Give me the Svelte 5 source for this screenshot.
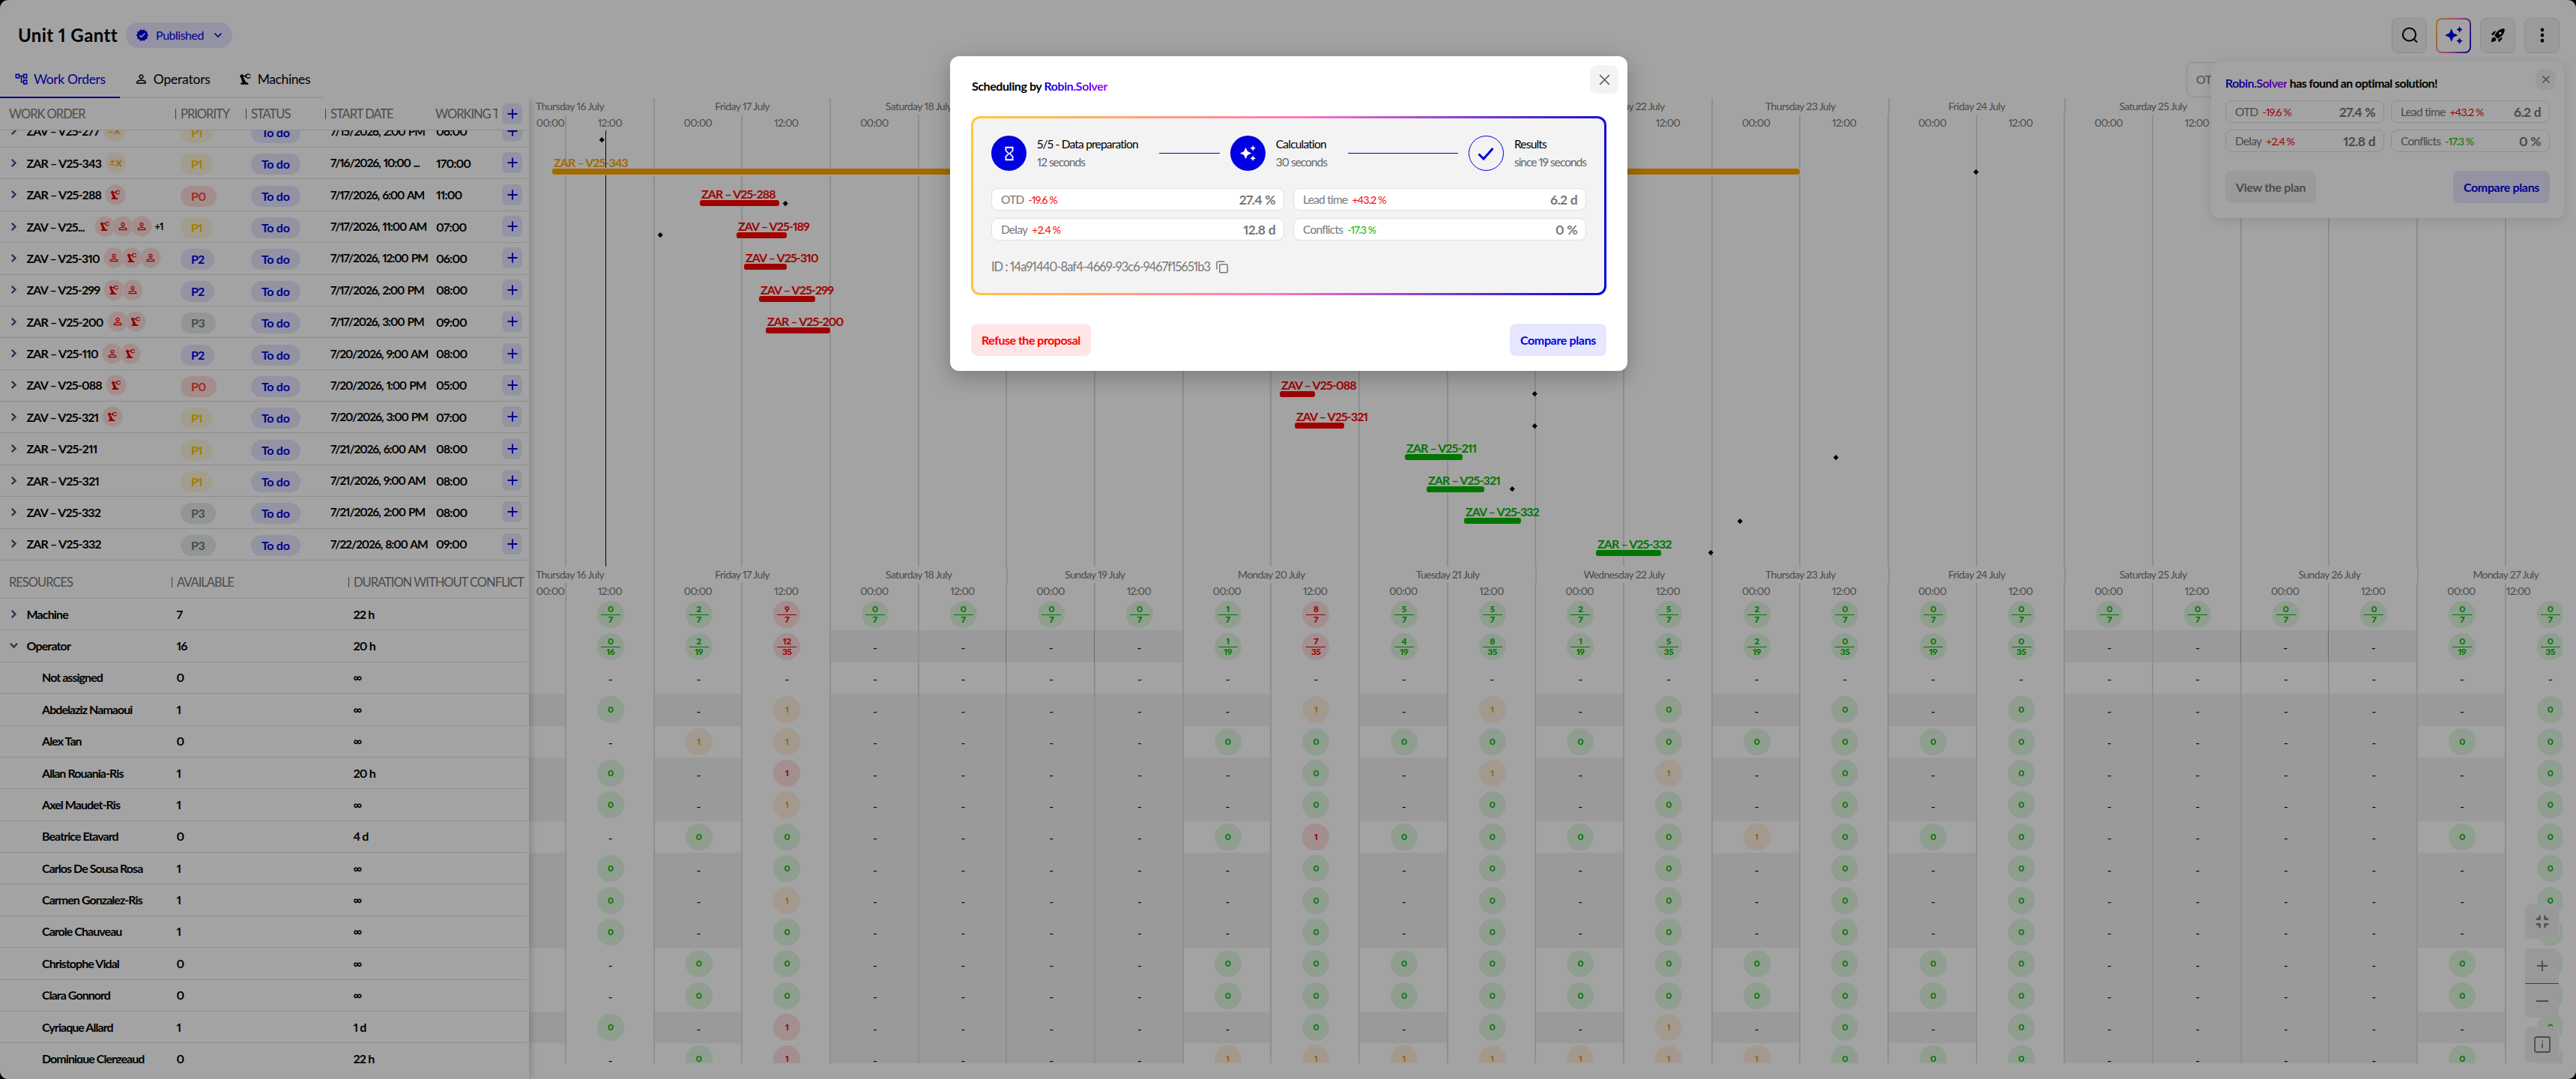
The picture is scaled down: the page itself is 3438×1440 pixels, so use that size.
<script lang="ts">
    const icons = {
        tree: 'M22 11V3h-7v3H9V3H2v8h7V8h2v10h4v3h7v-8h-7v3h-2V8h2v3h7zM7 9H4V5h3v4zm10 6h3v4h-3v-4zm0-10h3v4h-3V5z',
        person: 'M12 5.9c1.16 0 2.1.94 2.1 2.1s-.94 2.1-2.1 2.1S9.9 9.16 9.9 8s.94-2.1 2.1-2.1m0 9c2.97 0 6.1 1.46 6.1 2.1v1.1H5.9V17c0-.64 3.13-2.1 6.1-2.1M12 4C9.79 4 8 5.79 8 8s1.79 4 4 4 4-1.79 4-4-1.79-4-4-4zm0 9c-2.67 0-8 1.34-8 4v3h16v-3c0-2.66-5.33-4-8-4z',
        robot: 'M19.93 8.35l-3.6 1.68L14 7.7V6.3l2.33-2.33 3.6 1.68c.38.18.82.01 1-.36.18-.38.01-.82-.36-1l-3.92-1.83c-.38-.18-.83-.1-1.13.2L13.78 4.4c-.18-.24-.46-.4-.78-.4-.55 0-1 .45-1 1v1H8.82C8.4 4.84 7.3 4 6 4 4.34 4 3 5.34 3 7c0 1.1.6 2.05 1.48 2.58L7.08 18H6c-1.1 0-2 .9-2 2v1h13v-1c0-1.1-.9-2-2-2h-1.62L8.41 8.77c.17-.24.31-.49.41-.77H12v1c0 .55.45 1 1 1 .32 0 .6-.16.78-.4l1.74 1.74c.3.3.75.38 1.13.2l3.92-1.83c.38-.18.54-.62.36-1-.18-.37-.62-.54-1-.36z',
        verified: 'M23 12l-2.44-2.79.34-3.69-3.61-.82-1.89-3.2L12 2.96 8.6 1.5 6.71 4.69 3.1 5.5l.34 3.7L1 12l2.44 2.79-.34 3.7 3.61.82L8.6 22.5l3.4-1.47 3.4 1.46 1.89-3.19 3.61-.82-.34-3.69L23 12zm-12.91 4.72l-3.8-3.81 1.48-1.48 2.32 2.33 5.85-5.87 1.48 1.48-7.33 7.35z',
        sparkles: 'M19 9l1.25-2.75L23 5l-2.75-1.25L19 1l-1.25 2.75L15 5l2.75 1.25L19 9zm-7.5.5L9 4 6.5 9.5 1 12l5.5 2.5L9 20l2.5-5.5L17 12l-5.5-2.5zM19 15l-1.25 2.75L15 19l2.75 1.25L19 23l1.25-2.75L23 19l-2.75-1.25L19 15z',
        rocket: 'M9.19 6.35c-2.04 2.29-3.44 5.58-3.57 5.89L2 10.69l4.05-4.05c.47-.47 1.15-.68 1.81-.55l1.33.26zM11.17 17s3.74-1.55 5.89-3.7c5.4-5.4 4.5-9.62 4.21-10.57-.95-.3-5.17-1.19-10.57 4.21C8.55 9.09 7 12.83 7 12.83L11.17 17zm6.48-2.19c-2.29 2.04-5.58 3.44-5.89 3.57L13.31 22l4.05-4.05c.47-.47.68-1.15.55-1.81l-.26-1.33zM9 18c0 .83-.34 1.58-.88 2.12C6.94 21.3 2 22 2 22s.7-4.94 1.88-6.12C4.42 15.34 5.17 15 6 15c1.66 0 3 1.34 3 3zm4-9c0-1.1.9-2 2-2s2 .9 2 2-.9 2-2 2-2-.9-2-2z',
        hourglass: 'M6 2v6h.01L6 8.01 10 12l-4 4 .01.01H6V22h12v-5.99h-.01L18 16l-4-4 4-3.99-.01-.01H18V2H6zm10 14.5V20H8v-3.5l4-4 4 4zm-4-5l-4-4V4h8v3.5l-4 4z',
        shrink: 'M5 16h3v3h2v-5H5v2zm3-8H5v2h5V5H8v3zm6 11h2v-3h3v-2h-5v5zm2-11V5h-2v5h5V8h-3z',
        dots: 'M12 1.5a2.6 2.6 0 100 5.2 2.6 2.6 0 000-5.2zM12 9.4a2.6 2.6 0 100 5.2 2.6 2.6 0 000-5.2zM12 17.3a2.6 2.6 0 100 5.2 2.6 2.6 0 000-5.2z'
    };

    // left/width/milestone are in pixels from the start of the timeline
    const orders = [
        { name: 'ZAV – V25-277', badges: ['x'], prio: 'P1', date: '7/15/2026, 2:00 PM', time: '06:00', milestone: 97 },
        { name: 'ZAR – V25-343', badges: ['x'], prio: 'P1', date: '7/16/2026, 10:00 ...', time: '170:00', left: 31, width: 1665, color: 'orange', milestone: 1931 },
        { name: 'ZAR – V25-288', badges: ['robot'], prio: 'P0', date: '7/17/2026, 6:00 AM', time: '11:00', left: 228, width: 106, color: 'red', milestone: 342 },
        { name: 'ZAV – V25-189', short: 'ZAV – V25...', badges: ['robot', 'person', 'person'], more: '+1', prio: 'P1', date: '7/17/2026, 11:00 AM', time: '07:00', left: 277, width: 67, color: 'red', milestone: 175 },
        { name: 'ZAV – V25-310', badges: ['person', 'robot', 'person'], prio: 'P2', date: '7/17/2026, 12:00 PM', time: '06:00', left: 287, width: 57, color: 'red' },
        { name: 'ZAV – V25-299', badges: ['robot', 'person'], prio: 'P2', date: '7/17/2026, 2:00 PM', time: '08:00', left: 307, width: 75, color: 'red' },
        { name: 'ZAR – V25-200', badges: ['person', 'robot'], prio: 'P3', date: '7/17/2026, 3:00 PM', time: '09:00', left: 316, width: 86, color: 'red' },
        { name: 'ZAR – V25-110', badges: ['person', 'robot'], prio: 'P2', date: '7/20/2026, 9:00 AM', time: '08:00' },
        { name: 'ZAV – V25-088', badges: ['robot'], prio: 'P0', date: '7/20/2026, 1:00 PM', time: '05:00', left: 1002, width: 47, color: 'red', milestone: 1342 },
        { name: 'ZAV – V25-321', badges: ['robot'], prio: 'P1', date: '7/20/2026, 3:00 PM', time: '07:00', left: 1022, width: 66, color: 'red', milestone: 1342 },
        { name: 'ZAR – V25-211', badges: [], prio: 'P1', date: '7/21/2026, 6:00 AM', time: '08:00', left: 1169, width: 77, color: 'green', milestone: 1744 },
        { name: 'ZAR – V25-321', badges: [], prio: 'P1', date: '7/21/2026, 9:00 AM', time: '08:00', left: 1198, width: 77, color: 'green', milestone: 1312 },
        { name: 'ZAV – V25-332', badges: [], prio: 'P3', date: '7/21/2026, 2:00 PM', time: '08:00', left: 1248, width: 76, color: 'green', milestone: 1616 },
        { name: 'ZAR – V25-332', badges: [], prio: 'P3', date: '7/22/2026, 8:00 AM', time: '09:00', left: 1424, width: 87, color: 'green', milestone: 1577 }
    ];

    // one character per half day: 0 = free, o = warning, r = conflict, # = off, - = none
    const resources = [
        { name: 'Machine', available: '7', duration: '22 h', open: false, group: true, load: ['0/7', '2/7', '9/7', '0/7', '0/7', '0/7', '0/7', '1/7', '8/7', '5/7', '5/7', '2/7', '5/7', '2/7', '0/7', '0/7', '0/7', '0/7', '0/7', '0/7', '0/7', '0/7', '0/7'] },
        { name: 'Operator', available: '16', duration: '20 h', open: true, group: true, load: ['0/16', '2/19', '12/35', '#', '#', '#', '#', '1/19', '7/35', '4/19', '8/35', '1/19', '5/35', '2/19', '0/35', '0/19', '0/35', '#', '#', '#', '#', '0/19', '0/35'] },
        { name: 'Not assigned', available: '0', duration: '∞', load: [...'-----------------------'] },
        { name: 'Abdelaziz Namaoui', available: '1', duration: '∞', load: [...'0#o#####o#o#0#0#0#####0'] },
        { name: 'Alex Tan', available: '0', duration: '∞', load: [...'-oo####0000000000####00'] },
        { name: 'Allan Rouania-Ris', available: '1', duration: '20 h', load: [...'0#r#####0#o#o#0#0#####0'] },
        { name: 'Axel Maudet-Ris', available: '1', duration: '∞', load: [...'0#o#####0#0#0#0#0#####0'] },
        { name: 'Beatrice Etavard', available: '0', duration: '4 d', load: [...'-00####0r0000o000####00'] },
        { name: 'Carlos De Sousa Rosa', available: '1', duration: '∞', load: [...'0#0#####0#0#0#0#0#####0'] },
        { name: 'Carmen Gonzalez-Ris', available: '1', duration: '∞', load: [...'0#o#####0#0#0#0#0#####0'] },
        { name: 'Carole Chauveau', available: '1', duration: '∞', load: [...'0#0#####0#0#0#0#0#####0'] },
        { name: 'Christophe Vidal', available: '0', duration: '∞', load: [...'-00####0000000000####00'] },
        { name: 'Clara Gonnord', available: '0', duration: '∞', load: [...'-00####0000000000####00'] },
        { name: 'Cyriaque Allard', available: '1', duration: '1 d', load: [...'0#r#####0#0#o#0#0#####0'] },
        { name: 'Dominique Clergeaud', available: '0', duration: '22 h', load: [...'-0r####ooooooo000####00'] }
    ];

    const days = ['Thursday 16 July', 'Friday 17 July', 'Saturday 18 July', 'Sunday 19 July', 'Monday 20 July', 'Tuesday 21 July', 'Wednesday 22 July', 'Thursday 23 July', 'Friday 24 July', 'Saturday 25 July', 'Sunday 26 July', 'Monday 27 July'];
    const slots = Array.from({ length: 24 }, (_, i) => (i % 2 ? '12:00' : '00:00'));

    const stats = [
        { label: 'OTD', delta: '-19.6 %', value: '27.4 %', good: false },
        { label: 'Lead time', delta: '+43.2 %', value: '6.2 d', good: false },
        { label: 'Delay', delta: '+2.4 %', value: '12.8 d', good: false },
        { label: 'Conflicts', delta: '-17.3 %', value: '0 %', good: true }
    ];

    const tone = (v: string) => {
        if (v === 'o') return 'warn';
        if (v === 'r' || v === '9/7' || v === '12/35' || v === '8/7' || v === '7/35') return 'bad';
        return 'ok';
    };

    let modalOpen = true;
    let toastOpen = true;
</script>

{#snippet icon(path, size)}
    <svg class="icon" width={size} height={size} viewBox="0 0 24 24" fill="currentColor"><path d={path} /></svg>
{/snippet}

{#snippet chevron(size, down)}
    <svg class="icon" class:down width={size} height={size} viewBox="0 0 12 12" fill="none" stroke="currentColor" stroke-width="2.5"><path d="M3 1 8.2 6 3 11" /></svg>
{/snippet}

{#snippet cross(size)}
    <svg class="icon" width={size} height={size} viewBox="0 0 16 16" fill="none" stroke="currentColor" stroke-width="1.6"><path d="M2 2l12 12M14 2 2 14" /></svg>
{/snippet}

{#snippet plus()}
    <button class="add" aria-label="Add"><svg class="icon" width="14" height="14" viewBox="0 0 14 14" stroke="currentColor" stroke-width="2"><path d="M7 .5v13M.5 7h13" /></svg></button>
{/snippet}

{#snippet timeHeader()}
    <div class="time-header">
        <div class="day-row">
            {#each days as day}<div class="day">{day}</div>{/each}
        </div>
        <div class="hour-row">
            {#each slots as slot}<div class="hour">{slot}</div>{/each}
        </div>
    </div>
{/snippet}

{#snippet statGrid()}
    <div class="stats">
        {#each stats as s}
            <div class="stat">
                <span class="stat-label">{s.label}</span>
                <span class="delta" class:good={s.good}>{s.delta}</span>
                <span class="stat-value">{s.value}</span>
            </div>
        {/each}
    </div>
{/snippet}

<div class="app">
    <header class="topbar">
        <h1>Unit 1 Gantt</h1>
        <button class="published">
            {@render icon(icons.verified, 18)}
            <span>Published</span>
            <svg class="icon" width="12" height="12" viewBox="0 0 12 12" fill="none" stroke="currentColor" stroke-width="1.7"><path d="M1.5 3.5 6 8l4.5-4.5" /></svg>
        </button>
        <div class="tools">
            <button class="tool" aria-label="Search">
                <svg class="icon" width="24" height="24" viewBox="0 0 24 24" fill="none" stroke="currentColor" stroke-width="2"><circle cx="11.5" cy="11" r="8.6" /><path d="m17.5 17 4.5 4.5" /></svg>
            </button>
            <button class="tool solver" aria-label="Solver">{@render icon(icons.sparkles, 26)}</button>
            <button class="tool" aria-label="Launch">{@render icon(icons.rocket, 22)}</button>
            <button class="tool" aria-label="More">{@render icon(icons.dots, 22)}</button>
        </div>
    </header>

    <nav class="tabs">
        <button class="tab active">{@render icon(icons.tree, 19)}<span class="t1">Work Orders</span></button>
        <button class="tab">{@render icon(icons.person, 19)}<span class="t2">Operators</span></button>
        <button class="tab">{@render icon(icons.robot, 19)}<span class="t3">Machines</span></button>
    </nav>

    <main class="main">
        <div class="tables">
            <section class="upper">
                <div class="row head order-cols">
                    <div class="first">WORK ORDER</div>
                    <div class="sep">PRIORITY</div>
                    <div class="sep">STATUS</div>
                    <div class="sep">START DATE</div>
                    <div class="sep clip">WORKING TIME</div>
                    {@render plus()}
                </div>
                <div class="body">
                    <div class="scrolled">
                        {#each orders as o}
                            <div class="row order-cols">
                                <div class="name">
                                    <span class="toggle">{@render chevron(11, false)}</span>
                                    <span class="label" class:cut={o.short}>{o.short ?? o.name}</span>
                                    <span class="badges">
                                        {#each o.badges as b}
                                            {#if b === 'x'}
                                                <span class="badge calc"><span class="sign">±</span>X</span>
                                            {:else}
                                                <span class="badge">{@render icon(icons[b], 16)}</span>
                                            {/if}
                                        {/each}
                                    </span>
                                    {#if o.more}<span class="more">{o.more}</span>{/if}
                                </div>
                                <div class="cell"><span class="pill {o.prio}">{o.prio}</span></div>
                                <div class="cell"><span class="pill todo">To do</span></div>
                                <div class="cell date">{o.date}</div>
                                <div class="cell">{o.time}</div>
                                {@render plus()}
                            </div>
                        {/each}
                    </div>
                </div>
            </section>

            <section class="lower">
                <div class="row head resource-cols">
                    <div class="first">RESOURCES</div>
                    <div class="sep">AVAILABLE</div>
                    <div class="sep">DURATION WITHOUT CONFLICT</div>
                </div>
                <div class="body">
                    {#each resources as r}
                        <div class="row resource-cols">
                            <div class="name" class:child={!r.group}>
                                {#if r.group}<span class="toggle">{@render chevron(11, r.open)}</span>{/if}
                                <span class="label">{r.name}</span>
                            </div>
                            <div class="cell">{r.available}</div>
                            <div class="cell">{r.duration}</div>
                        </div>
                    {/each}
                </div>
            </section>
        </div>

        <div class="timelines">
            <section class="upper">
                {@render timeHeader()}
                <div class="body chart">
                    <div class="lanes">
                        {#each slots as _}<div class="lane"></div>{/each}
                    </div>
                    <div class="now"></div>
                    <div class="scrolled tracks">
                        {#each orders as o}
                            <div class="track">
                                {#if o.width}
                                    <div class="task {o.color}" style="left: {o.left}px; width: {o.width}px">
                                        <span class="task-label">{o.name}</span>
                                        <span class="bar"></span>
                                    </div>
                                {/if}
                                {#if o.milestone}<span class="milestone" style="left: {o.milestone}px"></span>{/if}
                            </div>
                        {/each}
                    </div>
                </div>
            </section>

            <section class="lower">
                {@render timeHeader()}
                <div class="body">
                    {#each resources as r}
                        <div class="load-row" class:total={r.name === 'Operator'}>
                            <div class="slot" class:off={r.load[1] === '#'}></div>
                            {#each r.load as v}
                                <div class="slot" class:off={v === '#'}>
                                    {#if v === '#' || v === '-'}
                                        <span class="dash">-</span>
                                    {:else if v.includes('/')}
                                        <span class="dot {tone(v)}">
                                            <span class="num">{v.split('/')[0]}</span>
                                            <span class="den">{v.split('/')[1]}</span>
                                        </span>
                                    {:else}
                                        <span class="dot {tone(v)}">{v === '0' ? 0 : 1}</span>
                                    {/if}
                                </div>
                            {/each}
                        </div>
                    {/each}
                </div>
            </section>
        </div>
    </main>

    <div class="kpi">OTD</div>

    {#if toastOpen}
        <aside class="toast">
            <div class="toast-title">
                <div><span class="brand">Robin.Solver</span> has found an optimal solution!</div>
                <button class="close small" aria-label="Close" onclick={() => (toastOpen = false)}>{@render cross(12)}</button>
            </div>
            {@render statGrid()}
            <div class="actions">
                <button class="btn neutral">View the plan</button>
                <button class="btn primary">Compare plans</button>
            </div>
        </aside>
    {/if}

    <div class="zoom-tools">
        <button class="float" aria-label="Fit">{@render icon(icons.shrink, 28)}</button>
        <div class="zoom">
            <button class="float" aria-label="Zoom in"><svg width="14" height="14" viewBox="0 0 14 14" stroke="currentColor" stroke-width="1.8"><path d="M7 0v14M0 7h14" /></svg></button>
            <button class="float" aria-label="Zoom out"><svg width="16" height="14" viewBox="0 0 16 14" stroke="currentColor" stroke-width="2.2"><path d="M0 7h16" /></svg></button>
        </div>
        <button class="float" aria-label="Info">
            <svg width="22" height="22" viewBox="0 0 22 22" fill="none" stroke="currentColor" stroke-width="1.8"><rect x="1" y="1" width="20" height="20" rx="2" /><path d="M11 9v7M11 5.5v2" stroke-width="1.6" /></svg>
        </button>
    </div>
</div>

{#if modalOpen}
    <div class="overlay">
        <div class="modal" role="dialog" aria-modal="true">
            <div class="modal-title">
                <div>Scheduling by <span class="brand">Robin.Solver</span></div>
                <button class="close" aria-label="Close" onclick={() => (modalOpen = false)}>{@render cross(17)}</button>
            </div>

            <div class="card">
                <div class="steps">
                    <div class="step">
                        <span class="step-icon">{@render icon(icons.hourglass, 22)}</span>
                        <div class="step-text"><div>5/5 - Data preparation</div><div class="sub">12 seconds</div></div>
                    </div>
                    <div class="line l1"></div>
                    <div class="step">
                        <span class="step-icon">{@render icon(icons.sparkles, 23)}</span>
                        <div class="step-text"><div>Calculation</div><div class="sub">30 seconds</div></div>
                    </div>
                    <div class="line l2"></div>
                    <div class="step">
                        <span class="step-icon outline">
                            <svg width="24" height="24" viewBox="0 0 24 24" fill="none" stroke="currentColor" stroke-width="3"><path d="M2.5 12.5 9 19 21.5 5" /></svg>
                        </span>
                        <div class="step-text"><div>Results</div><div class="sub">since 19 seconds</div></div>
                    </div>
                </div>
                {@render statGrid()}
                <div class="run-id">
                    <span>ID : 14a91440-8af4-4669-93c6-9467f15651b3</span>
                    <svg width="16" height="17" viewBox="0 0 16 17" fill="none" stroke="currentColor" stroke-width="1.5"><rect x="4.75" y="4.75" width="10.5" height="11" rx="1.8" /><path d="M1 11.5V3a2 2 0 0 1 2-2h8.5" /></svg>
                </div>
            </div>

            <div class="actions">
                <button class="btn danger">Refuse the proposal</button>
                <button class="btn primary">Compare plans</button>
            </div>
        </div>
    </div>
{/if}

<style>
    :global(body) {
        background: #000;
        overflow: hidden;
    }

    .app, .overlay {
        font-family: Lato, 'Open Sans', sans-serif;
        font-variant-numeric: proportional-nums;
        width: 3438px;
        height: 1440px;
        box-sizing: border-box;
    }

    .app {
        position: relative;
        display: flex;
        flex-direction: column;
        background: #fff;
        border-radius: 11px;
        overflow: hidden;
        color: #000;
    }

    button {
        font: inherit;
        font-variant-numeric: inherit;
        color: inherit;
        border: none;
        background: none;
        padding: 0;
        display: flex;
        align-items: center;
        justify-content: center;
        letter-spacing: inherit;
        box-sizing: border-box;
    }

    .icon {
        display: block;
        flex: none;
    }

    .down {
        transform: rotate(90deg);
    }

    /* Top bar */
    .topbar {
        display: flex;
        align-items: center;
        height: 94px;
        padding: 0 22px 0 24px;
    }

    h1 {
        margin: -2px 0 0;
        width: 144px;
        font-size: 24px;
        font-weight: 700;
        letter-spacing: 0.4px;
        white-space: nowrap;
    }

    .published {
        width: 142px;
        height: 34px;
        border-radius: 17px;
        background: #e6e6ff;
        color: #0000e0;
        font-size: 16px;
        letter-spacing: -0.5px;
    }

    .published span {
        margin: -2px 13px 0 9px;
    }

    .tools {
        display: flex;
        gap: 12px;
        margin-left: auto;
    }

    .tool {
        width: 47px;
        height: 47px;
        border-radius: 8px;
        border: 1px solid #dfdfdf;
        background: #f2f2f2;
    }

    .solver {
        color: #0000e0;
        border: 2px solid transparent;
        background: linear-gradient(#fff, #fff) padding-box, linear-gradient(110deg, #ffc62e, #f26fb5 50%, #0000e0) border-box;
    }

    .tabs {
        display: flex;
        height: 37px;
        width: 433px;
    }

    .tab {
        justify-content: flex-start;
        gap: 7px;
        font-size: 17.5px;
        letter-spacing: -0.2px;
        padding: 0 19px 12px;
        border-bottom: 2px solid #f0f0f0;
        white-space: nowrap;
    }

    .tab:last-child {
        flex: 1;
        padding-left: 18px;
    }

    .tab.active {
        width: 160px;
        color: #0000e0;
        border-color: #0000e0;
    }

    .t1 {
        letter-spacing: -0.35px;
    }

    .t3 {
        letter-spacing: -0.4px;
    }

    /* Tables */
    .main {
        flex: 1;
        display: flex;
        min-height: 0;
    }

    .tables {
        width: 706px;
        flex: none;
        background: #fff;
        box-shadow: 3px 0 9px rgba(0, 0, 0, 0.18);
        z-index: 1;
        clip-path: inset(0 -20px 0 0);
    }

    .upper {
        height: 625px;
        display: flex;
        flex-direction: column;
    }

    .lower {
        height: 663px;
        display: flex;
        flex-direction: column;
    }

    .body {
        flex: 1;
        min-height: 0;
        overflow: hidden;
    }

    .scrolled {
        margin-top: -19.3px;
    }

    .row {
        display: grid;
        align-items: center;
        height: 42.38px;
        width: 704px;
        box-sizing: border-box;
        padding-bottom: 1px;
        border-bottom: 1px solid #dedede;
        font-size: 16px;
        font-weight: 700;
        letter-spacing: -0.85px;
        white-space: nowrap;
    }

    .order-cols {
        grid-template-columns: 234px 94px 106px 141px 95px 34px;
    }

    .resource-cols {
        grid-template-columns: 229px 236px 1fr;
    }

    .row.head {
        height: 43px;
        padding-bottom: 0;
        flex: none;
        color: #777;
        font-size: 16.5px;
        font-weight: 400;
        letter-spacing: -1px;
    }

    .first {
        padding-left: 12px;
    }

    .sep {
        display: flex;
        align-items: center;
        gap: 6px;
    }

    .sep::before {
        content: '';
        width: 1px;
        height: 14px;
        background: #666;
    }

    .clip {
        width: 89px;
        overflow: hidden;
    }

    .name {
        display: flex;
        align-items: center;
        padding-left: 13px;
    }

    .toggle {
        width: 22.5px;
        color: #4a4a82;
    }

    .child {
        padding-left: 56px;
    }

    .child .label {
        letter-spacing: -0.95px;
    }

    .label.cut {
        margin-right: 8px;
    }

    .badges {
        display: flex;
        margin-left: 5px;
    }

    .badge {
        display: flex;
        align-items: center;
        justify-content: center;
        width: 28px;
        height: 28px;
        margin-right: -3.5px;
        border-radius: 50%;
        box-sizing: border-box;
        border: 1px solid #ffecec;
        background: #ffdede;
        color: #e80000;
    }

    .badge.calc {
        background: #ffefdf;
        border-color: #fff3e8;
        color: #f5a400;
        font-size: 12px;
        font-weight: 900;
    }

    .sign {
        font-size: 12px;
        margin: -2px 2px 0 0;
    }

    .more {
        font-size: 13.5px;
        margin-left: 7px;
    }

    .cell {
        padding-left: 7px;
    }

    .date {
        letter-spacing: -1.1px;
        word-spacing: 1.5px;
        font-size: 15.5px;
    }

    .resource-cols .cell {
        padding-left: 6.5px;
    }

    .pill {
        display: inline-block;
        height: 28px;
        line-height: 27px;
        border-radius: 14px;
        padding: 0 14px;
        margin-top: 4px;
        letter-spacing: -0.3px;
        vertical-align: middle;
    }

    .P0 {
        background: #ffdedc;
        color: #ff4034;
    }

    .P1 {
        background: #fff6de;
        color: #ffc400;
        letter-spacing: -1px;
    }

    .P2, .todo {
        background: #e6e6ff;
        color: #0000e0;
    }

    .P2 {
        letter-spacing: -0.9px;
    }

    .P3 {
        background: #e6ebed;
        color: #70777a;
    }

    .add {
        width: 27px;
        height: 28px;
        border-radius: 8px;
        background: #e6e6ff;
        color: #0000e0;
    }

    /* Timelines */
    .timelines {
        width: 2714px;
        overflow: hidden;
    }

    .time-header {
        flex: none;
        height: 43px;
        color: #777;
        font-size: 14px;
        letter-spacing: -0.6px;
        white-space: nowrap;
    }

    .day-row {
        display: grid;
        grid-template-columns: 166px repeat(11, 235.36px);
        height: 22px;
    }

    .day {
        display: flex;
        align-items: center;
        justify-content: center;
        padding-bottom: 2px;
        border-left: 2px solid #dedede;
    }

    .day:first-child {
        justify-content: flex-start;
        padding-left: 9px;
        border: none;
    }

    .hour-row, .load-row, .lanes {
        display: grid;
        grid-template-columns: 48px repeat(23, 117.68px);
    }

    .hour-row {
        height: 21px;
    }

    .hour {
        display: flex;
        align-items: center;
        justify-content: center;
        border-left: 2px solid #dedede;
        padding-bottom: 1px;
    }

    .hour:first-child {
        border: none;
        padding: 0 0 1px 9px;
    }

    .hour:last-child {
        justify-content: flex-start;
    }

    .chart {
        display: grid;
        grid-template-rows: 100%;
        grid-template-columns: 100%;
    }

    .lanes, .tracks, .now {
        grid-area: 1 / 1;
    }

    .lane {
        border-left: 2px solid #dedede;
    }

    .lane:first-child {
        border: none;
    }

    .now {
        width: 1px;
        margin-left: 102px;
        background: #000;
    }

    .track {
        position: relative;
        height: 42.38px;
    }

    .task {
        position: absolute;
        top: 11px;
        height: 25px;
        color: currentColor;
    }

    .task-label {
        display: block;
        height: 17px;
        line-height: 18px;
        padding-left: 2px;
        font-size: 16px;
        font-weight: 700;
        letter-spacing: -0.9px;
        white-space: nowrap;
    }

    .bar {
        display: block;
        height: 8px;
        border-radius: 3px;
        background: currentColor;
        box-shadow: 0 0 0 1px #fff;
    }

    .orange {
        color: #ffa600;
    }

    .red {
        color: #fa0000;
    }

    .green {
        color: #00b900;
    }

    .milestone {
        position: absolute;
        top: 29.5px;
        width: 4.5px;
        height: 4.5px;
        margin-left: -2px;
        background: #000;
        transform: rotate(45deg);
    }

    .load-row {
        height: 42.38px;
    }

    .slot {
        display: flex;
        align-items: center;
        justify-content: center;
        border-left: 2px solid #dedede;
        padding-left: 2px;
    }

    .slot:first-child {
        border: none;
    }

    .off {
        background: #f1f1f1;
    }

    .total .slot:nth-child(7), .total .slot:nth-child(8), .total .slot:nth-child(21), .total .slot:nth-child(22) {
        border-left: 1px solid #a5a5a5;
    }

    .dash {
        font-size: 16px;
        margin-top: 2px;
    }

    .dot {
        display: flex;
        flex-direction: column;
        align-items: center;
        justify-content: center;
        width: 36px;
        height: 36px;
        border-radius: 50%;
        font-size: 12px;
        line-height: 12px;
        font-weight: 900;
        letter-spacing: -0.5px;
    }

    .num {
        padding-bottom: 1px;
        width: 26px;
        text-align: center;
        border-bottom: 1px solid currentColor;
    }

    .ok {
        background: #e2f7e2;
        color: #00b900;
    }

    .warn {
        background: #fff0e0;
        color: #ee9d0a;
    }

    .bad {
        background: #ffe0e0;
        color: #f40000;
    }

    /* Floating elements over the chart */
    .kpi {
        position: absolute;
        left: 2918px;
        top: 83px;
        width: 120px;
        height: 45px;
        line-height: 43px;
        padding-left: 12px;
        border: 1px solid #dedede;
        border-radius: 9px;
        background: #fff;
        color: #777;
        font-size: 16px;
        letter-spacing: -0.5px;
    }

    .toast {
        position: absolute;
        z-index: 2;
        left: 2951px;
        top: 82px;
        width: 471px;
        height: 209px;
        box-sizing: border-box;
        padding: 10px 19px 20px;
        border-radius: 11px;
        background: #fff;
        box-shadow: 0 3px 16px rgba(0, 0, 0, 0.12);
        display: flex;
        flex-direction: column;
    }

    .toast-title {
        display: flex;
        justify-content: space-between;
        font-size: 16px;
        font-weight: 700;
        letter-spacing: -0.57px;
        line-height: 38px;
        height: 42px;
        margin-right: -8px;
    }

    .brand {
        background: linear-gradient(90deg, #0000e0, #a000ff);
        background-clip: text;
        color: transparent;
    }

    .close {
        width: 38px;
        height: 38px;
        border-radius: 9px;
        background: #f3f3f3;
        color: #666;
    }

    .close.small {
        width: 27px;
        height: 28px;
    }

    .stats {
        display: grid;
        grid-template-columns: 1fr 1fr;
        gap: 9px;
    }

    .stat {
        display: flex;
        align-items: center;
        height: 30px;
        box-sizing: border-box;
        padding: 0 11px 0 12px;
        border: 1px solid #dfdfdf;
        border-radius: 9px;
        background: #fff;
        color: #777;
        font-size: 15.5px;
        letter-spacing: -0.75px;
        white-space: nowrap;
    }

    .delta {
        margin-left: 6px;
        color: #fa0000;
        font-size: 14px;
        letter-spacing: -0.75px;
    }

    .delta.good {
        color: #00b900;
    }

    .stat-value {
        margin-left: auto;
        font-size: 17.5px;
        font-weight: 700;
        letter-spacing: -0.6px;
        word-spacing: 0.5px;
    }

    .actions {
        display: flex;
        justify-content: space-between;
        margin-top: auto;
    }

    .btn {
        height: 43px;
        border-radius: 8px;
        padding: 0 14px 1px;
        font-size: 16px;
        font-weight: 700;
        letter-spacing: -0.35px;
    }

    .primary {
        background: #e6e6ff;
        color: #0000e0;
    }

    .neutral {
        background: #f1f1f1;
        color: #777;
    }

    .danger {
        background: #ffe6e6;
        color: #fa0000;
        letter-spacing: -0.5px;
    }

    .zoom-tools {
        position: absolute;
        z-index: 2;
        left: 3370px;
        top: 1207px;
        display: flex;
        flex-direction: column;
        gap: 13px;
        color: #777;
    }

    .float {
        width: 45px;
        height: 46px;
        border-radius: 7px;
        background: #f0f0f0;
        box-shadow: 0 0 0 1px #fafafa;
    }

    .zoom {
        border-radius: 7px;
        overflow: hidden;
    }

    .zoom .float {
        border-radius: 0;
        box-shadow: none;
    }

    .zoom .float + .float {
        border-top: 1px solid #666;
    }

    /* Modal */
    .overlay {
        position: absolute;
        z-index: 5;
        top: 0;
        left: 0;
        background: rgba(0, 0, 0, 0.36);
    }

    .modal {
        width: 904px;
        height: 420px;
        box-sizing: border-box;
        margin: 75px 0 0 1268px;
        padding: 12px 28px 20px;
        border-radius: 12px;
        background: #fff;
        box-shadow: 0 8px 30px rgba(0, 0, 0, 0.25);
        display: flex;
        flex-direction: column;
    }

    .modal-title {
        display: flex;
        justify-content: space-between;
        height: 68px;
        line-height: 55px;
        margin-right: -16px;
        padding-left: 1px;
        font-size: 16px;
        font-weight: 700;
        letter-spacing: -0.42px;
    }

    .card {
        height: 239px;
        box-sizing: border-box;
        padding: 23px 24px;
        border: 3px solid transparent;
        border-radius: 12px;
        background: linear-gradient(#f3f3f3, #f3f3f3) padding-box, linear-gradient(100deg, #ffcc33, #ff7abf 50%, #0000e0) border-box;
    }

    .card .stats {
        column-gap: 12px;
        row-gap: 10px;
    }

    .steps {
        display: flex;
        align-items: center;
        height: 47px;
        margin-bottom: 23px;
    }

    .step {
        display: flex;
        align-items: center;
        gap: 14px;
    }

    .step-icon {
        display: flex;
        align-items: center;
        justify-content: center;
        width: 47px;
        height: 47px;
        box-sizing: border-box;
        border-radius: 50%;
        background: #0000e0;
        color: #fff;
    }

    .step-icon.outline {
        border: 1px solid #0000e0;
        background: none;
        color: #0000e0;
    }

    .step-text {
        font-size: 15.5px;
        line-height: 24px;
        letter-spacing: -0.8px;
        margin-top: -2px;
        white-space: nowrap;
    }

    .sub {
        color: #666;
        letter-spacing: -1px;
    }

    .line {
        height: 1.4px;
        background: #0000e0;
        flex: none;
    }

    .l1 {
        width: 81px;
        margin: 0 14px 0 auto;
    }

    .l2 {
        width: 147px;
        margin: 0 14px 0 auto;
    }

    .run-id {
        display: flex;
        align-items: center;
        gap: 8px;
        margin-top: 25px;
        color: #777;
        font-size: 16.5px;
        letter-spacing: -1px;
    }
</style>
